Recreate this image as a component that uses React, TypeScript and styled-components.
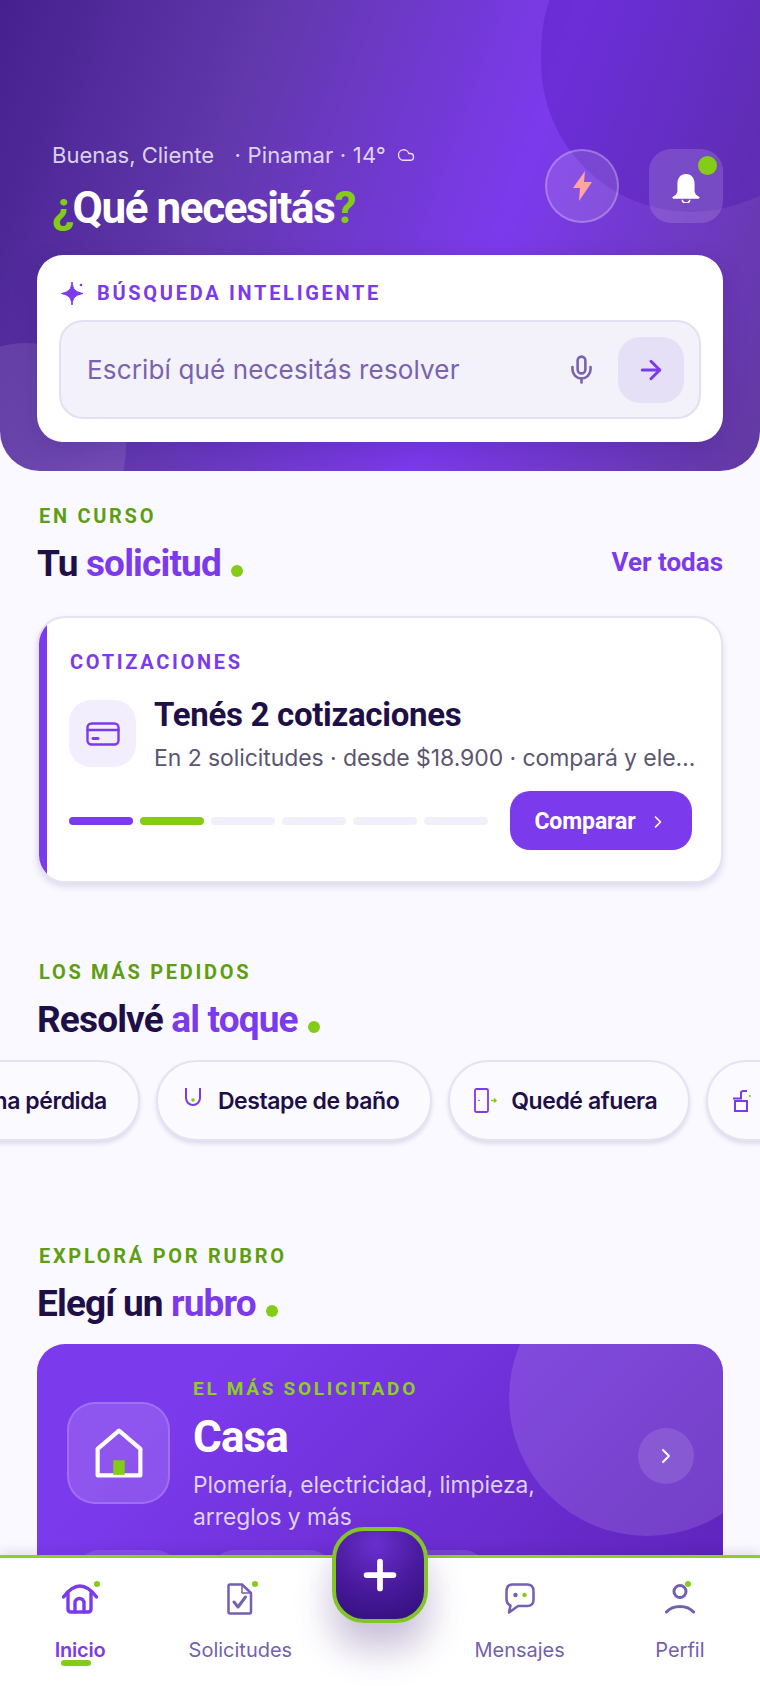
import * as React from "react";
import styled, { createGlobalStyle } from "styled-components";
import { ArrowRight, ChevronRight, Cloud, Mic, Plus } from "lucide-react";

const GlobalStyle = createGlobalStyle`
    html, body {
        margin: 0;
        padding: 0;
        background: #faf9ff;
        font-family: "Inter", "Noto Sans", sans-serif;
    }
    * {
        box-sizing: border-box;
    }
`;

const displayFont = `"Roboto", "Inter", sans-serif`;

const Page = styled.div`
    position: relative;
    width: 760px;
    height: 1686px;
    overflow: hidden;
    background: #faf9ff;
`;

const Hero = styled.header`
    position: relative;
    height: 471px;
    padding: 142px 37px 0;
    overflow: hidden;
    border-radius: 0 0 40px 40px;
    background: linear-gradient(110deg, #45208e 0%, #6238ac 30%, #7c3aed 63%, #62399f 100%);
`;

const BlobTop = styled.div`
    position: absolute;
    left: 541px;
    top: -100px;
    width: 300px;
    height: 312px;
    border-radius: 150px;
    background: rgba(70, 20, 170, 0.3);
`;

const BlobBottom = styled.div`
    position: absolute;
    left: -74px;
    top: 343px;
    width: 200px;
    height: 208px;
    border-radius: 50%;
    background: rgba(255, 255, 255, 0.1);
`;

const HeroRow = styled.div`
    position: relative;
    display: flex;
    justify-content: space-between;
    align-items: flex-end;
    padding-left: 15px;
`;

const Greeting = styled.div`
    display: flex;
    align-items: center;
    height: 26px;
    color: rgba(255, 255, 255, 0.8);
    font-size: 22px;
    white-space: pre;
`;

const GreetingPlace = styled.span`
    margin-left: 14px;
    letter-spacing: 0.2px;
`;

const CloudMark = styled.span`
    display: flex;
    margin-left: 11px;
    color: rgba(255, 255, 255, 0.85);
`;

const HeroTitle = styled.h1`
    margin: 15px 0 0;
    color: #fff;
    font-family: ${displayFont};
    font-size: 44px;
    line-height: 50px;
    font-weight: 700;
    letter-spacing: -1.4px;
    span {
        color: #84cc16;
    }
`;

const HeroActions = styled.div`
    display: flex;
    gap: 30px;
    margin-bottom: 10px;
`;

const BoltButton = styled.div`
    display: flex;
    align-items: center;
    justify-content: center;
    width: 74px;
    height: 74px;
    border-radius: 50%;
    border: 2px solid rgba(255, 255, 255, 0.25);
    background: rgba(255, 255, 255, 0.12);
`;

const BellButton = styled.div`
    position: relative;
    display: flex;
    align-items: center;
    justify-content: center;
    width: 74px;
    height: 74px;
    border-radius: 22px;
    background: rgba(255, 255, 255, 0.14);
`;

const BellDot = styled.span`
    position: absolute;
    top: 7px;
    right: 6px;
    width: 19px;
    height: 19px;
    border-radius: 50%;
    background: #84cc16;
`;

const SearchCard = styled.div`
    position: relative;
    margin-top: 22px;
    height: 187px;
    padding: 22px 22px;
    border-radius: 26px;
    background: #fff;
    box-shadow: 0 8px 24px rgba(40, 15, 100, 0.18);
`;

const SearchLabel = styled.div`
    display: flex;
    align-items: center;
    gap: 12px;
    height: 32px;
    padding-left: 2px;
    color: #7c3aed;
    font-family: ${displayFont};
    font-size: 20px;
    font-weight: 700;
    letter-spacing: 2.7px;
`;

const SearchBox = styled.div`
    display: flex;
    align-items: center;
    height: 99px;
    margin-top: 11px;
    padding: 0 15px 0 26px;
    border: 2px solid #e4e0f3;
    border-radius: 24px;
    background: #f3f1fa;
`;

const Placeholder = styled.div`
    flex: 1;
    color: #7a63ad;
    font-size: 26px;
    letter-spacing: 0.15px;
`;

const SendButton = styled.div`
    display: flex;
    align-items: center;
    justify-content: center;
    width: 66px;
    height: 66px;
    margin-left: 21px;
    border-radius: 22px;
    background: #e6e0f7;
    color: #7c3aed;
`;

const Section = styled.section<{ $top: number }>`
    padding-top: ${p => p.$top}px;
`;

const SectionInner = styled.div`
    padding: 0 37px;
`;

const Eyebrow = styled.div`
    height: 22px;
    padding-left: 2px;
    color: #5f9e12;
    font-family: ${displayFont};
    font-size: 20px;
    line-height: 22px;
    font-weight: 700;
    letter-spacing: 2.7px;
`;

const HeadRow = styled.div<{ $gap: number }>`
    display: flex;
    align-items: center;
    justify-content: space-between;
    margin: 15px 0 ${p => p.$gap}px;
`;

const Heading = styled.h2`
    margin: 0;
    color: #1e0f47;
    font-family: ${displayFont};
    font-size: 37px;
    line-height: 44px;
    font-weight: 700;
    letter-spacing: -0.85px;
    em {
        color: #7c3aed;
        font-style: normal;
    }
`;

const HeadDot = styled.span`
    display: inline-block;
    width: 12px;
    height: 12px;
    margin-left: 10px;
    border-radius: 50%;
    background: #84cc16;
    vertical-align: -1px;
`;

const SeeAll = styled.a`
    margin-bottom: 4px;
    color: #7c3aed;
    font-family: ${displayFont};
    font-size: 26px;
    font-weight: 700;
`;

const RequestCard = styled.article`
    position: relative;
    height: 267px;
    padding: 31px 29px 0 30px;
    overflow: hidden;
    border: 2px solid #e6e2f3;
    border-radius: 28px;
    background: #fff;
    box-shadow: 0 4px 6px rgba(60, 40, 130, 0.14);
    &::before {
        content: "";
        position: absolute;
        left: 0;
        top: 0;
        bottom: 0;
        width: 8px;
        background: #7c3aed;
    }
`;

const CardLabel = styled.div`
    height: 26px;
    padding-left: 1px;
    color: #7c3aed;
    font-family: ${displayFont};
    font-size: 20px;
    line-height: 26px;
    font-weight: 700;
    letter-spacing: 2.7px;
`;

const CardBody = styled.div`
    display: flex;
    gap: 18px;
    margin-top: 23px;
`;

const IconTile = styled.div`
    flex: none;
    display: flex;
    align-items: center;
    justify-content: center;
    width: 67px;
    height: 67px;
    margin-top: 2px;
    border-radius: 22px;
    background: #f3eefd;
`;

const CardText = styled.div`
    min-width: 0;
    flex: 1;
`;

const CardTitle = styled.div`
    margin-top: -3px;
    color: #1e0f47;
    font-family: ${displayFont};
    font-size: 33px;
    line-height: 40px;
    font-weight: 700;
    letter-spacing: -0.3px;
`;

const CardSub = styled.div`
    margin: 8px -6px 0 0;
    overflow: hidden;
    color: #5b5670;
    font-size: 23px;
    line-height: 30px;
    letter-spacing: -0.08px;
    white-space: nowrap;
    text-overflow: ellipsis;
`;

const CardFoot = styled.div`
    display: flex;
    align-items: center;
    justify-content: space-between;
    margin-top: 18px;
`;

const Steps = styled.div`
    display: flex;
    gap: 7px;
`;

const Step = styled.span<{ $color: string }>`
    width: 64px;
    height: 8px;
    border-radius: 4px;
    background: ${p => p.$color};
`;

const CompareButton = styled.div`
    display: flex;
    align-items: center;
    justify-content: center;
    gap: 12px;
    width: 182px;
    height: 59px;
    padding-top: 2px;
    border-radius: 20px;
    background: #7c3aed;
    color: #fff;
    font-family: ${displayFont};
    font-size: 23px;
    font-weight: 700;
    letter-spacing: -0.1px;
`;

const PillRow = styled.div`
    display: flex;
    gap: 16px;
    width: 760px;
    overflow: hidden;
    padding-bottom: 8px;
`;

const Pill = styled.div<{ $offset?: number }>`
    flex: none;
    display: flex;
    align-items: center;
    gap: 13px;
    height: 81px;
    margin-left: ${p => p.$offset || 0}px;
    padding: 0 31px 0 24px;
    border: 2px solid #e6e2f3;
    border-radius: 41px;
    background: #fbfaff;
    box-shadow: 0 3px 4px rgba(60, 40, 130, 0.14);
    color: #1e0f47;
    font-size: 23px;
    font-weight: 600;
    letter-spacing: -0.42px;
    white-space: nowrap;
`;

const PillIcon = styled.svg`
    flex: none;
`;

const CategoryCard = styled.article`
    position: relative;
    height: 320px;
    padding: 34px 29px 0 30px;
    overflow: hidden;
    border-radius: 28px;
    background: linear-gradient(135deg, #7c3aed 20%, #5b21b6 100%);
`;

const CategoryGlow = styled.div`
    position: absolute;
    left: 472px;
    top: -84px;
    width: 276px;
    height: 276px;
    border-radius: 50%;
    background: rgba(255, 255, 255, 0.12);
`;

const CategoryRow = styled.div`
    position: relative;
    display: flex;
    align-items: center;
`;

const CategoryTile = styled.div`
    flex: none;
    display: flex;
    align-items: center;
    justify-content: center;
    width: 103px;
    height: 102px;
    margin-top: -5px;
    border: 2px solid rgba(255, 255, 255, 0.16);
    border-radius: 28px;
    background: rgba(255, 255, 255, 0.14);
`;

const CategoryText = styled.div`
    flex: 1;
    margin-left: 23px;
`;

const CategoryEyebrow = styled.div`
    color: #8ecf22;
    font-family: ${displayFont};
    font-size: 19px;
    line-height: 22px;
    font-weight: 700;
    letter-spacing: 2.7px;
`;

const CategoryName = styled.div`
    margin-top: 12px;
    color: #fff;
    font-family: ${displayFont};
    font-size: 44px;
    line-height: 50px;
    font-weight: 700;
    letter-spacing: -0.9px;
`;

const CategoryDesc = styled.div`
    margin-top: 7px;
    width: 380px;
    color: rgba(255, 255, 255, 0.78);
    font-size: 22.8px;
    line-height: 32px;
`;

const RoundNext = styled.div`
    flex: none;
    display: flex;
    align-items: center;
    justify-content: center;
    width: 56px;
    height: 56px;
    border-radius: 50%;
    background: rgba(255, 255, 255, 0.12);
    color: #fff;
`;

const ChipRow = styled.div`
    position: relative;
    display: flex;
    gap: 34px;
    margin-top: 17px;
    padding-left: 10px;
`;

const Chip = styled.span<{ $width: number }>`
    width: ${p => p.$width}px;
    height: 44px;
    border-radius: 22px;
    background: rgba(255, 255, 255, 0.12);
`;

const BottomNav = styled.nav`
    position: absolute;
    left: 0;
    right: 0;
    bottom: 0;
    display: grid;
    grid-template-columns: 1fr 1fr 119px 1fr 1fr;
    height: 131px;
    padding-top: 24px;
    border-top: 3px solid #8ecf22;
    background: #fff;
    box-shadow: 0 -4px 10px rgba(30, 15, 71, 0.1);
`;

const NavItem = styled.div<{ $active?: boolean }>`
    display: flex;
    flex-direction: column;
    align-items: center;
    color: ${p => (p.$active ? "#7c3aed" : "#7460b0")};
    font-size: 20px;
    font-weight: ${p => (p.$active ? 600 : 400)};
    letter-spacing: ${p => (p.$active ? "-0.2px" : "0")};
`;

const NavIcon = styled.div`
    position: relative;
    display: flex;
    align-items: center;
    justify-content: center;
    height: 33px;
`;

const NavDot = styled.span<{ $right: number }>`
    position: absolute;
    top: -1px;
    right: ${p => p.$right}px;
    width: 6px;
    height: 6px;
    border-radius: 50%;
    background: #84cc16;
`;

const NavLabel = styled.div`
    margin-top: 23px;
    line-height: 24px;
`;

const ActiveBar = styled.span`
    width: 30px;
    height: 6px;
    margin: -2px 8px 0 0;
    border-radius: 3px;
    background: #84cc16;
`;

const Fab = styled.div`
    position: absolute;
    left: 332px;
    top: -31px;
    display: flex;
    align-items: center;
    justify-content: center;
    width: 96px;
    height: 96px;
    border: 4px solid #84c32a;
    border-radius: 32px;
    background: radial-gradient(circle at 45% 15%, #6a2fd0 0%, #4a1a9e 50%, #2f0f78 100%);
    color: #fff;
    box-shadow: 0 26px 36px rgba(60, 30, 120, 0.28);
`;

function Sparkle() {
    return (
        <svg width="24" height="25" viewBox="0 0 24 25" fill="#7c3aed">
            <path d="M11 1 C12 8.500 13.500 10.500 22 12.500 C13.500 14.500 12 16.500 11 24 C10 16.500 8.500 14.500 0.500 12.500 C8.500 10.500 10 8.500 11 1 Z" stroke="#7c3aed" strokeWidth="1" strokeLinejoin="round" />
            <circle cx="20" cy="4" r="1.300" />
        </svg>
    );
}

function Bolt() {
    return (
        <svg width="19" height="30" viewBox="0 0 19 30" fill="#ffa5a0">
            <path d="M12 0 L0 17 H7 L6 30 L19 11 H11 Z" />
        </svg>
    );
}

function Bell() {
    return (
        <svg width="30" height="30" viewBox="0 0 28 28" fill="#fff" style={{ marginTop: 4 }}>
            <path d="M14 1 C8.500 1 6 5.500 6 10 V17 C6 19 4 21 1.500 22.500 C1 23.300 1.500 24 2.500 24 H25.500 C26.500 24 27 23.300 26.500 22.500 C24 21 22 19 22 17 V10 C22 5.500 19.500 1 14 1 Z" />
            <path d="M10.500 25 a3.500 3 0 0 0 7 0" fill="none" stroke="#fff" strokeWidth="1.500" />
        </svg>
    );
}

function CardIcon() {
    return (
        <svg width="34" height="24" viewBox="0 0 34 24" fill="none" stroke="#7c3aed" strokeWidth="2.400" strokeLinecap="round">
            <rect x="1.500" y="1.500" width="31" height="21" rx="4" />
            <path d="M1.500 8 H32.500" />
            <path d="M7 16.500 H12" strokeWidth="3" />
        </svg>
    );
}

function DrainIcon() {
    return (
        <PillIcon width="18" height="20" viewBox="0 0 18 20" fill="none" stroke="#7c3aed" strokeWidth="2" style={{ margin: "-8px 3px 0 2px" }}>
            <path d="M2 1 V11 a7 7 0 0 0 14 0 V1" />
            <circle cx="9" cy="13" r="1.800" fill="#84cc16" stroke="none" />
        </PillIcon>
    );
}

function DoorIcon() {
    return (
        <PillIcon width="24" height="25" viewBox="0 0 24 25" fill="none" stroke="#7c3aed" strokeWidth="1.800">
            <rect x="1" y="1" width="13" height="23" rx="1.500" />
            <circle cx="5" cy="12.500" r="0.800" fill="#7c3aed" stroke="none" />
            <path d="M17 12.500 H22 M20 10.500 L22 12.500 L20 14.500" stroke="#84cc16" strokeWidth="1.500" />
        </PillIcon>
    );
}

function LeakIcon() {
    return (
        <PillIcon width="20" height="24" viewBox="0 0 20 24" fill="none" stroke="#7c3aed" strokeWidth="2">
            <path d="M9 2 H17 M9 2 V9" />
            <circle cx="6" cy="20" r="2" fill="#84cc16" stroke="none" />
        </PillIcon>
    );
}

function LockIcon() {
    return (
        <PillIcon width="20" height="22" viewBox="0 0 20 22" fill="none" stroke="#7c3aed" strokeWidth="2">
            <rect x="3" y="11" width="12" height="10" />
            <path d="M1 8.500 H9 V3 C9 1.800 10 1 11.500 1 H15" />
            <circle cx="18" cy="6" r="1" fill="#84cc16" stroke="none" />
        </PillIcon>
    );
}

function HouseIcon() {
    return (
        <svg width="48" height="50" viewBox="0 0 46 48" fill="none">
            <path d="M2.500 20 L23 2.500 L43.500 20 V45.500 H2.500 Z" stroke="#fff" strokeWidth="4" strokeLinejoin="round" />
            <rect x="17.500" y="31" width="11" height="14" fill="#84cc16" />
        </svg>
    );
}

function NavHome() {
    return (
        <svg width="36" height="30" viewBox="0 0 36 30" fill="none" stroke="#7c3aed" strokeWidth="3.400" strokeLinecap="round" strokeLinejoin="round">
            <path d="M1.500 13 C6 7 11 2 18 2 C25 2 30 7 34.500 13" />
            <path d="M6 9 V25 Q6 28 9 28 H26 Q29 28 29 25 V9" />
            <path d="M13 28 V19 a4.500 4.500 0 0 1 9 0 V28" />
        </svg>
    );
}

function NavDoc() {
    return (
        <svg width="26" height="32" viewBox="0 0 26 32" fill="none" stroke="#7460b0" strokeWidth="2.500" strokeLinecap="round" strokeLinejoin="round">
            <path d="M3 1.500 H15 L24 10 V29 Q24 30.500 22.500 30.500 H3 Q1.500 30.500 1.500 29 V3 Q1.500 1.500 3 1.500 Z" />
            <path d="M15 1.500 V10 H24" strokeWidth="1.500" />
            <path d="M7 19 L11 24 L18.500 14" strokeWidth="3" />
        </svg>
    );
}

function NavChat() {
    return (
        <svg width="30" height="31" viewBox="0 0 30 31" fill="none" stroke="#7460b0" strokeWidth="2.500" strokeLinejoin="round">
            <path d="M8 1.500 H22 Q28.500 1.500 28.500 8 V17 Q28.500 23 22 23 H13 L4 29.500 L5.500 22.500 Q1.500 21 1.500 16 V8 Q1.500 1.500 8 1.500 Z" />
            <circle cx="10.500" cy="12" r="2.200" fill="#7460b0" stroke="none" />
            <circle cx="19.500" cy="12" r="2.200" fill="#84cc16" stroke="none" />
        </svg>
    );
}

function NavUser() {
    return (
        <svg width="30" height="31" viewBox="0 0 30 31" fill="none" stroke="#7460b0" strokeWidth="3" strokeLinecap="round">
            <circle cx="15" cy="8.500" r="6" />
            <path d="M1.500 29 C8 21.500 22 21.500 28.500 29" />
        </svg>
    );
}

function SectionHead({ eyebrow, dark, accent, gap, right }: { eyebrow: string; dark: string; accent: string; gap: number; right?: string }) {
    return (
        <>
            <Eyebrow>{eyebrow}</Eyebrow>
            <HeadRow $gap={gap}>
                <Heading>
                    {dark} <em>{accent}</em>
                    <HeadDot />
                </Heading>
                {right && <SeeAll>{right}</SeeAll>}
            </HeadRow>
        </>
    );
}

export default function App() {
    const steps = ["#7c3aed", "#84cc16", "#f1eff9", "#f1eff9", "#f1eff9", "#f1eff9"];
    return (
        <Page>
            <GlobalStyle />
            <Hero>
                <BlobTop />
                <BlobBottom />
                <HeroRow>
                    <div>
                        <Greeting>
                            Buenas, Cliente
                            <GreetingPlace> · Pinamar · 14°</GreetingPlace>
                            <CloudMark>
                                <Cloud size={18} strokeWidth={1.8} />
                            </CloudMark>
                        </Greeting>
                        <HeroTitle>
                            <span>¿</span>Qué necesitás<span>?</span>
                        </HeroTitle>
                    </div>
                    <HeroActions>
                        <BoltButton>
                            <Bolt />
                        </BoltButton>
                        <BellButton>
                            <Bell />
                            <BellDot />
                        </BellButton>
                    </HeroActions>
                </HeroRow>
                <SearchCard>
                    <SearchLabel>
                        <Sparkle />
                        BÚSQUEDA INTELIGENTE
                    </SearchLabel>
                    <SearchBox>
                        <Placeholder>Escribí qué necesitás resolver</Placeholder>
                        <Mic size={31} color="#7a63ad" strokeWidth={2} />
                        <SendButton>
                            <ArrowRight size={30} strokeWidth={2.4} />
                        </SendButton>
                    </SearchBox>
                </SearchCard>
            </Hero>

            <Section $top={34}>
                <SectionInner>
                    <SectionHead eyebrow="EN CURSO" dark="Tu" accent="solicitud" gap={30} right="Ver todas" />
                    <RequestCard>
                        <CardLabel>COTIZACIONES</CardLabel>
                        <CardBody>
                            <IconTile>
                                <CardIcon />
                            </IconTile>
                            <CardText>
                                <CardTitle>Tenés 2 cotizaciones</CardTitle>
                                <CardSub>En 2 solicitudes · desde $18.900 · compará y elegí la mejor</CardSub>
                            </CardText>
                        </CardBody>
                        <CardFoot>
                            <Steps>
                                {steps.map((color, i) => (
                                    <Step key={i} $color={color} />
                                ))}
                            </Steps>
                            <CompareButton>
                                Comparar
                                <ChevronRight size={20} strokeWidth={2} />
                            </CompareButton>
                        </CardFoot>
                    </RequestCard>
                </SectionInner>
            </Section>

            <Section $top={78}>
                <SectionInner>
                    <SectionHead eyebrow="LOS MÁS PEDIDOS" dark="Resolvé" accent="al toque" gap={18} />
                </SectionInner>
                <PillRow>
                    <Pill $offset={-82}>
                        <LeakIcon />
                        Una pérdida
                    </Pill>
                    <Pill>
                        <DrainIcon />
                        Destape de baño
                    </Pill>
                    <Pill>
                        <DoorIcon />
                        Quedé afuera
                    </Pill>
                    <Pill>
                        <LockIcon />
                        Cambiar cerradura
                    </Pill>
                </PillRow>
            </Section>

            <Section $top={96}>
                <SectionInner>
                    <SectionHead eyebrow="EXPLORÁ POR RUBRO" dark="Elegí un" accent="rubro" gap={18} />
                    <CategoryCard>
                        <CategoryGlow />
                        <CategoryRow>
                            <CategoryTile>
                                <HouseIcon />
                            </CategoryTile>
                            <CategoryText>
                                <CategoryEyebrow>EL MÁS SOLICITADO</CategoryEyebrow>
                                <CategoryName>Casa</CategoryName>
                                <CategoryDesc>Plomería, electricidad, limpieza, arreglos y más</CategoryDesc>
                            </CategoryText>
                            <RoundNext>
                                <ChevronRight size={24} strokeWidth={2} />
                            </RoundNext>
                        </CategoryRow>
                        <ChipRow>
                            <Chip $width={101} />
                            <Chip $width={120} />
                            <Chip $width={120} />
                        </ChipRow>
                    </CategoryCard>
                </SectionInner>
            </Section>

            <BottomNav>
                <NavItem $active>
                    <NavIcon>
                        <NavHome />
                        <NavDot $right={-2} />
                    </NavIcon>
                    <NavLabel>Inicio</NavLabel>
                    <ActiveBar />
                </NavItem>
                <NavItem>
                    <NavIcon>
                        <NavDoc />
                        <NavDot $right={-5} />
                    </NavIcon>
                    <NavLabel>Solicitudes</NavLabel>
                </NavItem>
                <div />
                <NavItem>
                    <NavIcon>
                        <NavChat />
                    </NavIcon>
                    <NavLabel>Mensajes</NavLabel>
                </NavItem>
                <NavItem>
                    <NavIcon>
                        <NavUser />
                        <NavDot $right={4} />
                    </NavIcon>
                    <NavLabel>Perfil</NavLabel>
                </NavItem>
                <Fab>
                    <Plus size={46} strokeWidth={3} />
                </Fab>
            </BottomNav>
        </Page>
    );
}
